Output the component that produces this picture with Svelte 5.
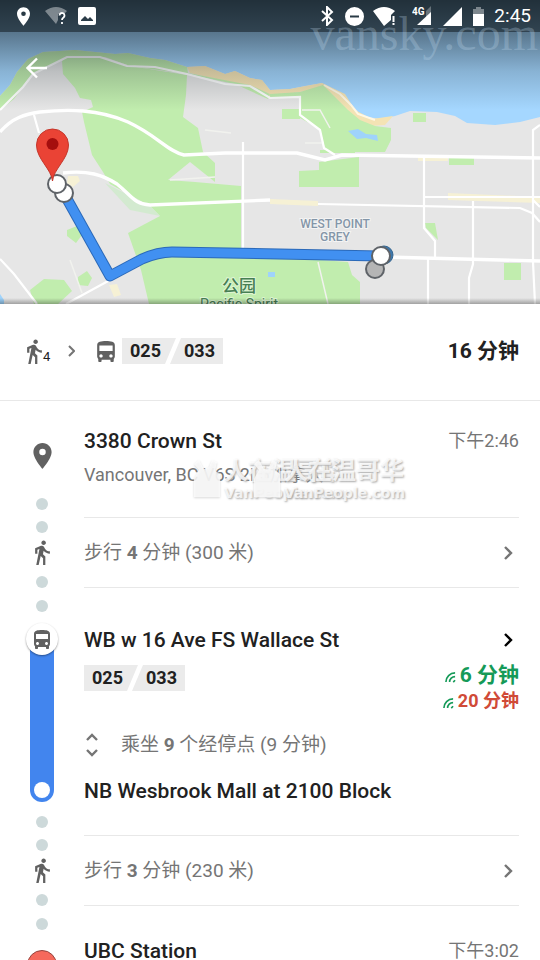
<script lang="ts">
	type Line = { code: string };

	const lines: Line[] = [{ code: '025' }, { code: '033' }];
	const realtime = [
		{ minutes: '6', late: false },
		{ minutes: '20', late: true }
	];

	let showStops = $state(false);
</script>

{#snippet walkIcon()}
	<svg class="walk-icon" viewBox="6 1 13 22" aria-hidden="true">
		<path
			d="M13.5 5.5c1.1 0 2-.9 2-2s-.9-2-2-2-2 .9-2 2 .9 2 2 2zM9.8 8.9L7 23h2.1l1.8-8 2.1 2v6h2v-7.5l-2.1-2 .6-3C14.8 12 16.8 13 19 13v-2c-1.9 0-3.5-1-4.3-2.4l-1-1.6c-.4-.6-1-1-1.7-1-.3 0-.5.1-.8.1L6 8.3V13h2V9.6l1.8-.7"
		/>
	</svg>
{/snippet}

{#snippet busIcon()}
	<svg class="bus-icon" viewBox="4 2 16 19" aria-hidden="true">
		<path
			d="M4 16c0 .88.39 1.67 1 2.22V20c0 .55.45 1 1 1h1c.55 0 1-.45 1-1v-1h8v1c0 .55.45 1 1 1h1c.55 0 1-.45 1-1v-1.78c.61-.55 1-1.34 1-2.22V6c0-3.5-3.58-4-8-4s-8 .5-8 4v10zm3.5 1c-.83 0-1.5-.67-1.5-1.5S6.67 14 7.5 14s1.5.67 1.5 1.5S8.33 17 7.5 17zm9 0c-.83 0-1.5-.67-1.5-1.5s.67-1.5 1.5-1.5 1.5.67 1.5 1.5-.67 1.5-1.5 1.5zm1.5-6H6V6h12v5z"
		/>
	</svg>
{/snippet}

{#snippet chevron()}
	<svg class="chevron" viewBox="0 0 10 16" aria-hidden="true">
		<path d="M1 2l6 6-6 6" />
	</svg>
{/snippet}

{#snippet chips()}
	<span class="chips">
		{#each lines as line (line.code)}
			<span class="chip">{line.code}</span>
		{/each}
	</span>
{/snippet}

{#snippet walkStep(minutes: string, metres: string)}
	<li class="step">
		<div class="rail walk-rail">
			<i class="dot"></i>
			{@render walkIcon()}
			<i class="dot"></i>
		</div>
		<button class="body walk-body">
			<span>步行 <b>{minutes}</b> 分钟 ({metres} 米)</span>
			{@render chevron()}
		</button>
	</li>
{/snippet}

{#snippet stamp()}
	<div class="stamp">
		<svg viewBox="0 0 30 42" aria-hidden="true">
			<path d="M3 20 7 13 2 7l5-4 5 9 5-2 3-7 5 2-2 9 5 3v23H2V22z" />
		</svg>
		<div>
			<span class="stamp-name">人在温哥华</span>
			<span class="stamp-url">VanPeople.com</span>
		</div>
	</div>
{/snippet}

<main>
	<header>
		<svg class="map" viewBox="0 0 540 304" preserveAspectRatio="xMidYMid slice" aria-label="地图">
			<defs>
				<linearGradient id="shade" x1="0" y1="0" x2="0" y2="1">
					<stop offset="0" stop-color="#16222a" stop-opacity="0.75" />
					<stop offset="0.3" stop-color="#16222a" stop-opacity="0.53" />
					<stop offset="0.65" stop-color="#16222a" stop-opacity="0.2" />
					<stop offset="1" stop-color="#16222a" stop-opacity="0" />
				</linearGradient>
				<linearGradient id="edge" x1="0" y1="0" x2="0" y2="1">
					<stop offset="0" stop-color="#000" stop-opacity="0" />
					<stop offset="1" stop-color="#000" stop-opacity="0.3" />
				</linearGradient>
			</defs>
			<rect width="540" height="304" fill="#a5d7ff" />
			<path
				fill="#e6e6e6"
				d="M0 96 10 85 17 72 28 59 43 52 75 50 115 54 128 53 150 58 165 60 187 67 205 66 225 74 235 71 250 78 262 80 270 90 290 89 305 86 322 83 333 92 345 96 352 105 362 116 380 119 395 116 410 111 437 112 455 116 467 123 495 125 520 122 540 117V304H0z"
			/>
			<path
				fill="#f4e3b4"
				d="M187 67 205 66 225 74 235 71 250 78 262 80 270 90 290 89 322 83 345 94 355 110 372 119 393 116 385 125 370 126 350 117 323 88 270 97 245 86 190 73z"
			/>
			<g fill="#c1edae">
				<path d="M0 96 10 85 17 72 28 59 43 52 75 50 115 54 128 53 150 58 165 60 187 67 188 73 250 85 270 94 268 99 235 84 187 74 130 66 105 57 67 57 32 74 14 99 0 110z" />
				<path
					d="M62 61 67 57 100 57 130 66 187 75 186 95 183 117 198 128 203 152 215 163 215 182 190 162 168 180 195 182 241 186V254L348 262 352 275 360 282V304H149L141 270 128 233 160 216 150 206 110 184 103 172 92 155 84 122 82 112 93 107 91 100 80 98 75 88 63 74z"
				/>
				<path d="M270 94 300 92 323 85 348 110 360 120 375 126 391 128 391 140 385 152H326L320 129 300 118V98H270z" />
				<path d="M282 109h18v10h-18zM413 113h13v9h-13zM299 171l20-1v-8l40-5v30h-60zM320 150h35v3h-35zM449 158h25v7h-25zM425 223h10l3 17-12-12zM504 263h17v17h-17zM67 230l10-4 5 9-6 8-9-7zM78 277l9-6 5 7-4 8-10-1zM30 290l14-11 20 1 8 11-14 13H34z" />
			</g>
			<path d="M105 183 150 206 160 216 130 210z" fill="#d3ead0" />
			<path d="m348 131 10-2 8 5 11 1 1 6-12-3-9 1zM0 294l4 6v4H0zM268 272h7v5h-7z" fill="#9fd3fb" />
			<g fill="#f6f1d5">
				<path d="M68 176h10l2 5-7 6-6-4zM109 285l8-1 4 11-7 2zM270 199l48 2v5l-48-2zM418 155h30v6h-30zM448 193l92 4v6l-92-3z" />
			</g>
			<g class="minor">
				<path d="M302 110h18l10 18M305 143h18M205 130l26 3M70 260l12 33M318 262l10 42M170 180l45-3" />
			</g>
			<g class="road">
				<path d="M0 110 12 98 23 87 33 74 67 57H100L127 66 155 67 187 74 225 84 250 86 270 98 300 97V115L320 130 324 148 335 155" />
				<path d="M34 115 39 133M243 142V250M424 157V228L435 241V258M424 197H540M473 201V264L469 278V304M428 258V304M533 150V262L535 304M533 200 540 207M533 150V130L540 125" />
				<path d="M318 204 520 208 532 213 540 222M0 259 14 274 37 304M66 304 110 280" />
			</g>
			<path
				class="road wide"
				d="M0 132C12 118 25 114 40 112 68 109 98 109 128 122 158 136 167 151 184 155L225 153 297 153 325 160 342 155 540 158"
			/>
			<path class="road wide" d="M63 173C88 170 103 175 117 184 132 196 134 204 150 205L270 200M385 257 540 261" />
			<path
				d="M324 85 340 94 351 105 358 114 375 120"
				fill="none"
				stroke="#fff8e4"
				stroke-width="2"
			/>
			<g class="label district">
				<text x="335" y="228">WEST POINT</text>
				<text x="335" y="241">GREY</text>
			</g>
			<g class="label park">
				<text class="park-zh" x="239" y="292">公园</text>
				<text x="239" y="309">Pacific Spirit</text>
			</g>
			<circle cx="384" cy="255" r="9" fill="#3f78ac" stroke="#34658f" />
			<path class="route casing" d="M62 190 110 276 142 259Q158 252 172 252L380 256" />
			<path class="route" d="M62 190 110 276 142 259Q158 252 172 252L380 256" />
			<g stroke="#5f6368" stroke-width="2">
				<circle cx="375" cy="269" r="9" fill="#b5b5b5" />
				<circle cx="381" cy="256" r="9" fill="#fff" />
				<circle cx="64" cy="193" r="9" fill="#fff" />
				<circle cx="57" cy="184" r="9" fill="#fff" />
			</g>
			<path
				d="M52.5 181c-1-12-16-22-16-36a16 16 0 0 1 32 0c0 14-15 24-16 36z"
				fill="#ea4335"
				stroke="#c5372b"
			/>
			<circle cx="52.5" cy="144" r="6" fill="#a50e0e" />
			<rect width="540" height="110" fill="url(#shade)" />
			<rect y="298" width="540" height="6" fill="url(#edge)" />
		</svg>

		<div class="overlay">
			<div class="status">
				<svg width="13" height="19" viewBox="5 2 14 20" aria-hidden="true">
					<path
						d="M12 2C8.13 2 5 5.13 5 9c0 5.25 7 13 7 13s7-7.75 7-13c0-3.87-3.13-7-7-7zm0 9.5a2.5 2.5 0 1 1 0-5 2.5 2.5 0 0 1 0 5z"
					/>
				</svg>
				<svg class="wifi-unknown" width="22" height="18" viewBox="0 0 22 18" aria-hidden="true">
					<path d="M0 4Q11-4 22 4L19 7h-6v6l-2 4z" opacity="0.4" />
					<path
						d="M14.500 8.500a2.500 2.500 0 1 1 4 2c-1 .7-1.500 1.200-1.500 2.500M17 15v2"
						fill="none"
						stroke="#fff"
						stroke-width="1.8"
					/>
				</svg>
				<svg width="18" height="18" viewBox="0 0 18 18" aria-hidden="true">
					<path
						fill-rule="evenodd"
						d="M2 0h14a2 2 0 0 1 2 2v14a2 2 0 0 1-2 2H2a2 2 0 0 1-2-2V2a2 2 0 0 1 2-2zm1 14h12v-1l-3-3-2 2-3-3-4 4z"
					/>
				</svg>
				<span class="spacer"></span>
				<svg width="13" height="20" viewBox="0 0 13 20" aria-hidden="true">
					<path d="m1 5 10 9-5 5V1l5 5-10 9" fill="none" stroke="#fff" stroke-width="2" />
				</svg>
				<svg width="19" height="19" viewBox="0 0 19 19" aria-hidden="true">
					<path fill-rule="evenodd" d="M9.5 0a9.5 9.5 0 1 1 0 19 9.5 9.5 0 0 1 0-19zM5 8.5v2h9v-2z" />
				</svg>
				<svg class="wifi" width="23" height="19" viewBox="0 0 23 19" aria-hidden="true">
					<path d="M0 4Q11-4 22 4L18 8v5l-7 6zM19.5 9h2v6h-2zm0 7h2v2h-2z" />
				</svg>
				<svg class="signal-4g" width="20" height="20" viewBox="0 0 20 20" aria-hidden="true">
					<path d="M19 0v8l-5 4V5z" opacity="0.3" />
					<path d="M19 6v13H5z" />
					<text x="0" y="9">4G</text>
				</svg>
				<svg width="19" height="19" viewBox="0 0 19 19" aria-hidden="true">
					<path d="M19 0v19H0z" />
				</svg>
				<svg width="11" height="19" viewBox="0 0 11 19" aria-hidden="true">
					<path d="M0 2h3V0h5v2h3v5H0z" opacity="0.4" />
					<path d="M0 7h11v12H0z" />
				</svg>
				<time>2:45</time>
			</div>
			<button class="back" aria-label="返回">
				<svg viewBox="0 0 22 22" aria-hidden="true">
					<path d="M21 11H2M11 1.5 1.5 11l9.5 9.5" />
				</svg>
			</button>
		</div>
		<span class="site-mark">vansky.com</span>
	</header>

	<section class="summary">
		{@render walkIcon()}
		<sub>4</sub>
		<svg class="arrow" viewBox="0 0 7 12" aria-hidden="true"><path d="m1 1 5 5-5 5" /></svg>
		{@render busIcon()}
		{@render chips()}
		<strong>16 分钟</strong>
	</section>

	<ol>
		<li class="step">
			<div class="rail origin-rail">
				<svg class="pin" viewBox="5 2 14 20" aria-hidden="true">
					<path
						d="M12 2C8.13 2 5 5.13 5 9c0 5.25 7 13 7 13s7-7.75 7-13c0-3.87-3.13-7-7-7zm0 9.5a2.5 2.5 0 1 1 0-5 2.5 2.5 0 0 1 0 5z"
					/>
				</svg>
				<i class="dot"></i>
			</div>
			<div class="body origin-body">
				<div class="line">
					<h2>3380 Crown St</h2>
					<time>下午2:46</time>
				</div>
				<p>Vancouver, BC V6S 2L5加拿大</p>
				<div class="stamps">
					{@render stamp()}
					{@render stamp()}
				</div>
			</div>
		</li>

		{@render walkStep('4', '300')}

		<li class="step">
			<div class="rail ride-rail">
				<i class="dot"></i>
				<span class="badge">{@render busIcon()}</span>
				<span class="track"><i></i></span>
				<i class="dot"></i>
			</div>
			<div class="body ride-body">
				<div class="line">
					<h2>WB w 16 Ave FS Wallace St</h2>
					<button class="more" aria-label="站点详情">{@render chevron()}</button>
				</div>
				<div class="line departures">
					{@render chips()}
					<div class="times">
						{#each realtime as r (r.minutes)}
							<span class="eta" class:late={r.late}>
								<svg viewBox="0 0 12 12" aria-hidden="true">
									<path d="M1 11A10 10 0 0 1 11 1M5 11a6 6 0 0 1 6-6M9 11l2-2" />
								</svg>
								{r.minutes} 分钟
							</span>
						{/each}
					</div>
				</div>
				<button class="stops" aria-expanded={showStops} onclick={() => (showStops = !showStops)}>
					<svg viewBox="0 0 14 24" aria-hidden="true"><path d="m2 7 5-5 5 5M2 17l5 5 5-5" /></svg>
					<span>乘坐 <b>9</b> 个经停点 (9 分钟)</span>
				</button>
				<h2>NB Wesbrook Mall at 2100 Block</h2>
			</div>
		</li>

		{@render walkStep('3', '230')}

		<li class="step">
			<div class="rail end-rail">
				<i class="dot"></i>
				<i class="end"></i>
			</div>
			<div class="body end-body">
				<div class="line">
					<h2>UBC Station</h2>
					<time>下午3:02</time>
				</div>
			</div>
		</li>
	</ol>
</main>

<style>
	:global(body) {
		margin: 0;
		background: #fff;
	}

	main {
		height: 100vh;
		overflow-y: auto;
		scrollbar-width: none;
		font-family: Roboto, 'Noto Sans CJK SC', sans-serif;
		font-size: 19px;
		line-height: 24px;
		color: #212121;
	}

	button {
		padding: 0;
		border: 0;
		background: none;
		font: inherit;
		color: inherit;
		text-align: left;
		cursor: pointer;
	}

	svg {
		display: block;
		flex: none;
	}

	h2,
	p {
		margin: 0;
	}

	h2 {
		font-size: 21px;
		font-weight: 500;
	}

	time {
		font-size: 18px;
		color: #757575;
	}

	/* map */
	header {
		display: grid;
		position: relative;
	}

	.map,
	.overlay {
		grid-area: 1 / 1;
	}

	.map {
		width: 100%;
	}

	.minor,
	.road {
		fill: none;
		stroke: #f1f2ee;
		stroke-width: 1.5;
	}

	.road {
		stroke: #fff;
		stroke-width: 2.2;
	}

	.road.wide {
		stroke-width: 3.4;
	}

	.route {
		fill: none;
		stroke: #4190f1;
		stroke-width: 9;
		stroke-linejoin: round;
	}

	.route.casing {
		stroke: #2b69b8;
		stroke-width: 11;
	}

	.label {
		text-anchor: middle;
		paint-order: stroke;
		stroke: #f4f4f4;
		stroke-width: 2;
	}

	.district {
		font-size: 12px;
		font-weight: 500;
		fill: #8496a8;
	}

	.park {
		font-size: 14px;
		fill: #477f54;
		stroke: #dff5d5;
	}

	.park-zh {
		font-size: 17px;
		font-weight: 500;
	}

	.overlay {
		z-index: 1;
	}

	.status {
		display: flex;
		align-items: center;
		height: 32px;
		box-sizing: border-box;
		padding: 0 9px 0 17px;
		background: rgba(10, 18, 22, 0.5);
		fill: #fff;
	}

	.status svg + svg {
		margin-left: 11px;
	}

	.status svg.wifi-unknown {
		margin-left: 15px;
	}

	.status svg.wifi {
		margin-left: 9px;
	}

	.status svg.signal-4g {
		margin-left: 16px;
		font-size: 10px;
		font-weight: 700;
	}

	.spacer {
		flex: 1;
	}

	.status time {
		margin-left: 10px;
		font-size: 19px;
		color: #fff;
	}

	.back {
		display: block;
		margin: 25px 0 0 26px;
	}

	.back svg {
		width: 22px;
		height: 22px;
		fill: none;
		stroke: #fff;
		stroke-width: 2.4;
	}

	.site-mark {
		position: absolute;
		top: 8px;
		right: 2px;
		z-index: 2;
		font: 48px/52px 'Liberation Serif', serif;
		color: rgba(190, 215, 235, 0.3);
		pointer-events: none;
	}

	/* summary row */
	.summary {
		display: flex;
		align-items: center;
		padding: 34px 21px 36px 27px;
		border-bottom: 1px solid #e8e8e8;
	}

	.walk-icon {
		width: 15px;
		height: 25px;
		fill: #616161;
	}

	.bus-icon {
		width: 18px;
		height: 21px;
		fill: #616161;
	}

	sub {
		align-self: flex-end;
		width: 8px;
		margin: 0 17px 0 1px;
		font-size: 13px;
		line-height: 14px;
	}

	.arrow {
		width: 7px;
		height: 12px;
		margin-right: 22px;
		fill: none;
		stroke: #757575;
		stroke-width: 2;
	}

	.summary .chips {
		margin-left: 7px;
	}

	.summary strong {
		margin-left: auto;
		font-size: 21px;
		font-weight: 700;
	}

	.chips {
		display: flex;
		font-size: 18px;
		font-weight: 700;
		line-height: 26px;
	}

	.chip {
		padding: 0 15px 0 8px;
		background: #ebebeb;
		clip-path: polygon(0 0, 100% 0, calc(100% - 11px) 100%, 0 100%);
	}

	.chip + .chip {
		margin-left: -6px;
		padding: 0 8px 0 14px;
		clip-path: polygon(11px 0, 100% 0, 100% 100%, 0 100%);
	}

	/* steps */
	ol {
		margin: 0;
		padding: 0;
		list-style: none;
	}

	.step {
		display: grid;
		grid-template-columns: 84px 1fr;
	}

	.rail {
		display: flex;
		flex-direction: column;
		align-items: center;
	}

	.body {
		margin-right: 21px;
		border-bottom: 1px solid #e8e8e8;
	}

	.line {
		display: flex;
		align-items: center;
		justify-content: space-between;
	}

	.dot {
		width: 12px;
		height: 12px;
		border-radius: 50%;
		background: #cdd9da;
	}

	.pin {
		width: 19px;
		height: 26px;
		fill: #616161;
	}

	.origin-rail {
		justify-content: space-between;
		padding: 42px 0 8px;
	}

	.origin-body {
		position: relative;
		padding: 28px 0 30px;
	}

	.origin-body p {
		margin-top: 10px;
		font-size: 18px;
		color: #757575;
	}

	.stamps {
		position: absolute;
		top: 56px;
		left: 108px;
		display: flex;
		pointer-events: none;
	}

	.stamp {
		display: flex;
		gap: 2px;
		width: 60px;
		white-space: nowrap;
		color: rgba(255, 255, 255, 0.8);
		text-shadow: 1px 1px 2px #aaa;
	}

	.stamp svg {
		width: 30px;
		height: 42px;
		fill: rgba(255, 255, 255, 0.75);
		filter: drop-shadow(0 1px 1px #ccc);
	}

	.stamp span {
		display: block;
	}

	.stamp-name {
		font-size: 24px;
		font-weight: 700;
		line-height: 28px;
	}

	.stamp-url {
		font: 700 14px/16px 'DejaVu Sans', sans-serif;
	}

	.walk-rail {
		padding-top: 3px;
	}

	.walk-rail .walk-icon {
		margin: 7px 0 11px;
	}

	.walk-body {
		display: flex;
		align-items: center;
		justify-content: space-between;
		font-size: 19px;
		color: #757575;
	}

	b {
		font-weight: 700;
	}

	.chevron {
		width: 10px;
		height: 16px;
		margin-right: 5px;
		fill: none;
		stroke: #757575;
		stroke-width: 2.4;
	}

	.more .chevron {
		stroke: #000;
	}

	.ride-rail {
		padding: 12px 0 8px;
	}

	.badge {
		z-index: 1;
		display: grid;
		place-items: center;
		width: 32px;
		height: 32px;
		margin-top: 11px;
		border-radius: 50%;
		background: #fff;
		box-shadow: 0 1px 2px rgba(0, 0, 0, 0.4);
	}

	.badge .bus-icon {
		width: 16px;
		height: 19px;
	}

	.track {
		display: flex;
		flex: 1;
		align-items: flex-end;
		width: 24px;
		box-sizing: border-box;
		margin: -8px 0 14px;
		padding: 4px;
		border-radius: 0 0 12px 12px;
		background: #4285ee;
	}

	.track i {
		width: 16px;
		height: 16px;
		border-radius: 50%;
		background: #fff;
	}

	.ride-body {
		padding: 40px 0 32px;
	}

	.departures {
		align-items: flex-start;
		margin-top: 13px;
	}

	.times {
		display: grid;
		justify-items: end;
		margin-top: -3px;
	}

	.eta {
		display: flex;
		align-items: center;
		gap: 4px;
		font-size: 21px;
		font-weight: 700;
		line-height: 26px;
		color: #159a58;
	}

	.eta.late {
		font-size: 18px;
		color: #d04a37;
	}

	.eta svg {
		width: 11px;
		height: 11px;
		margin-top: 5px;
		fill: none;
		stroke: #159a58;
		stroke-width: 1.8;
	}

	.stops {
		display: flex;
		align-items: center;
		gap: 22px;
		margin: 19px 0 22px 1px;
		color: #757575;
	}

	.stops svg {
		width: 14px;
		height: 24px;
		fill: none;
		stroke: #757575;
		stroke-width: 2.4;
	}

	.end-rail {
		padding-top: 12px;
	}

	.end {
		width: 30px;
		height: 30px;
		box-sizing: border-box;
		margin-top: 20px;
		border: 1px solid #94453f;
		border-radius: 50%;
		background: #f5695c;
	}

	.end-body {
		padding: 33px 0 30px;
	}
</style>
